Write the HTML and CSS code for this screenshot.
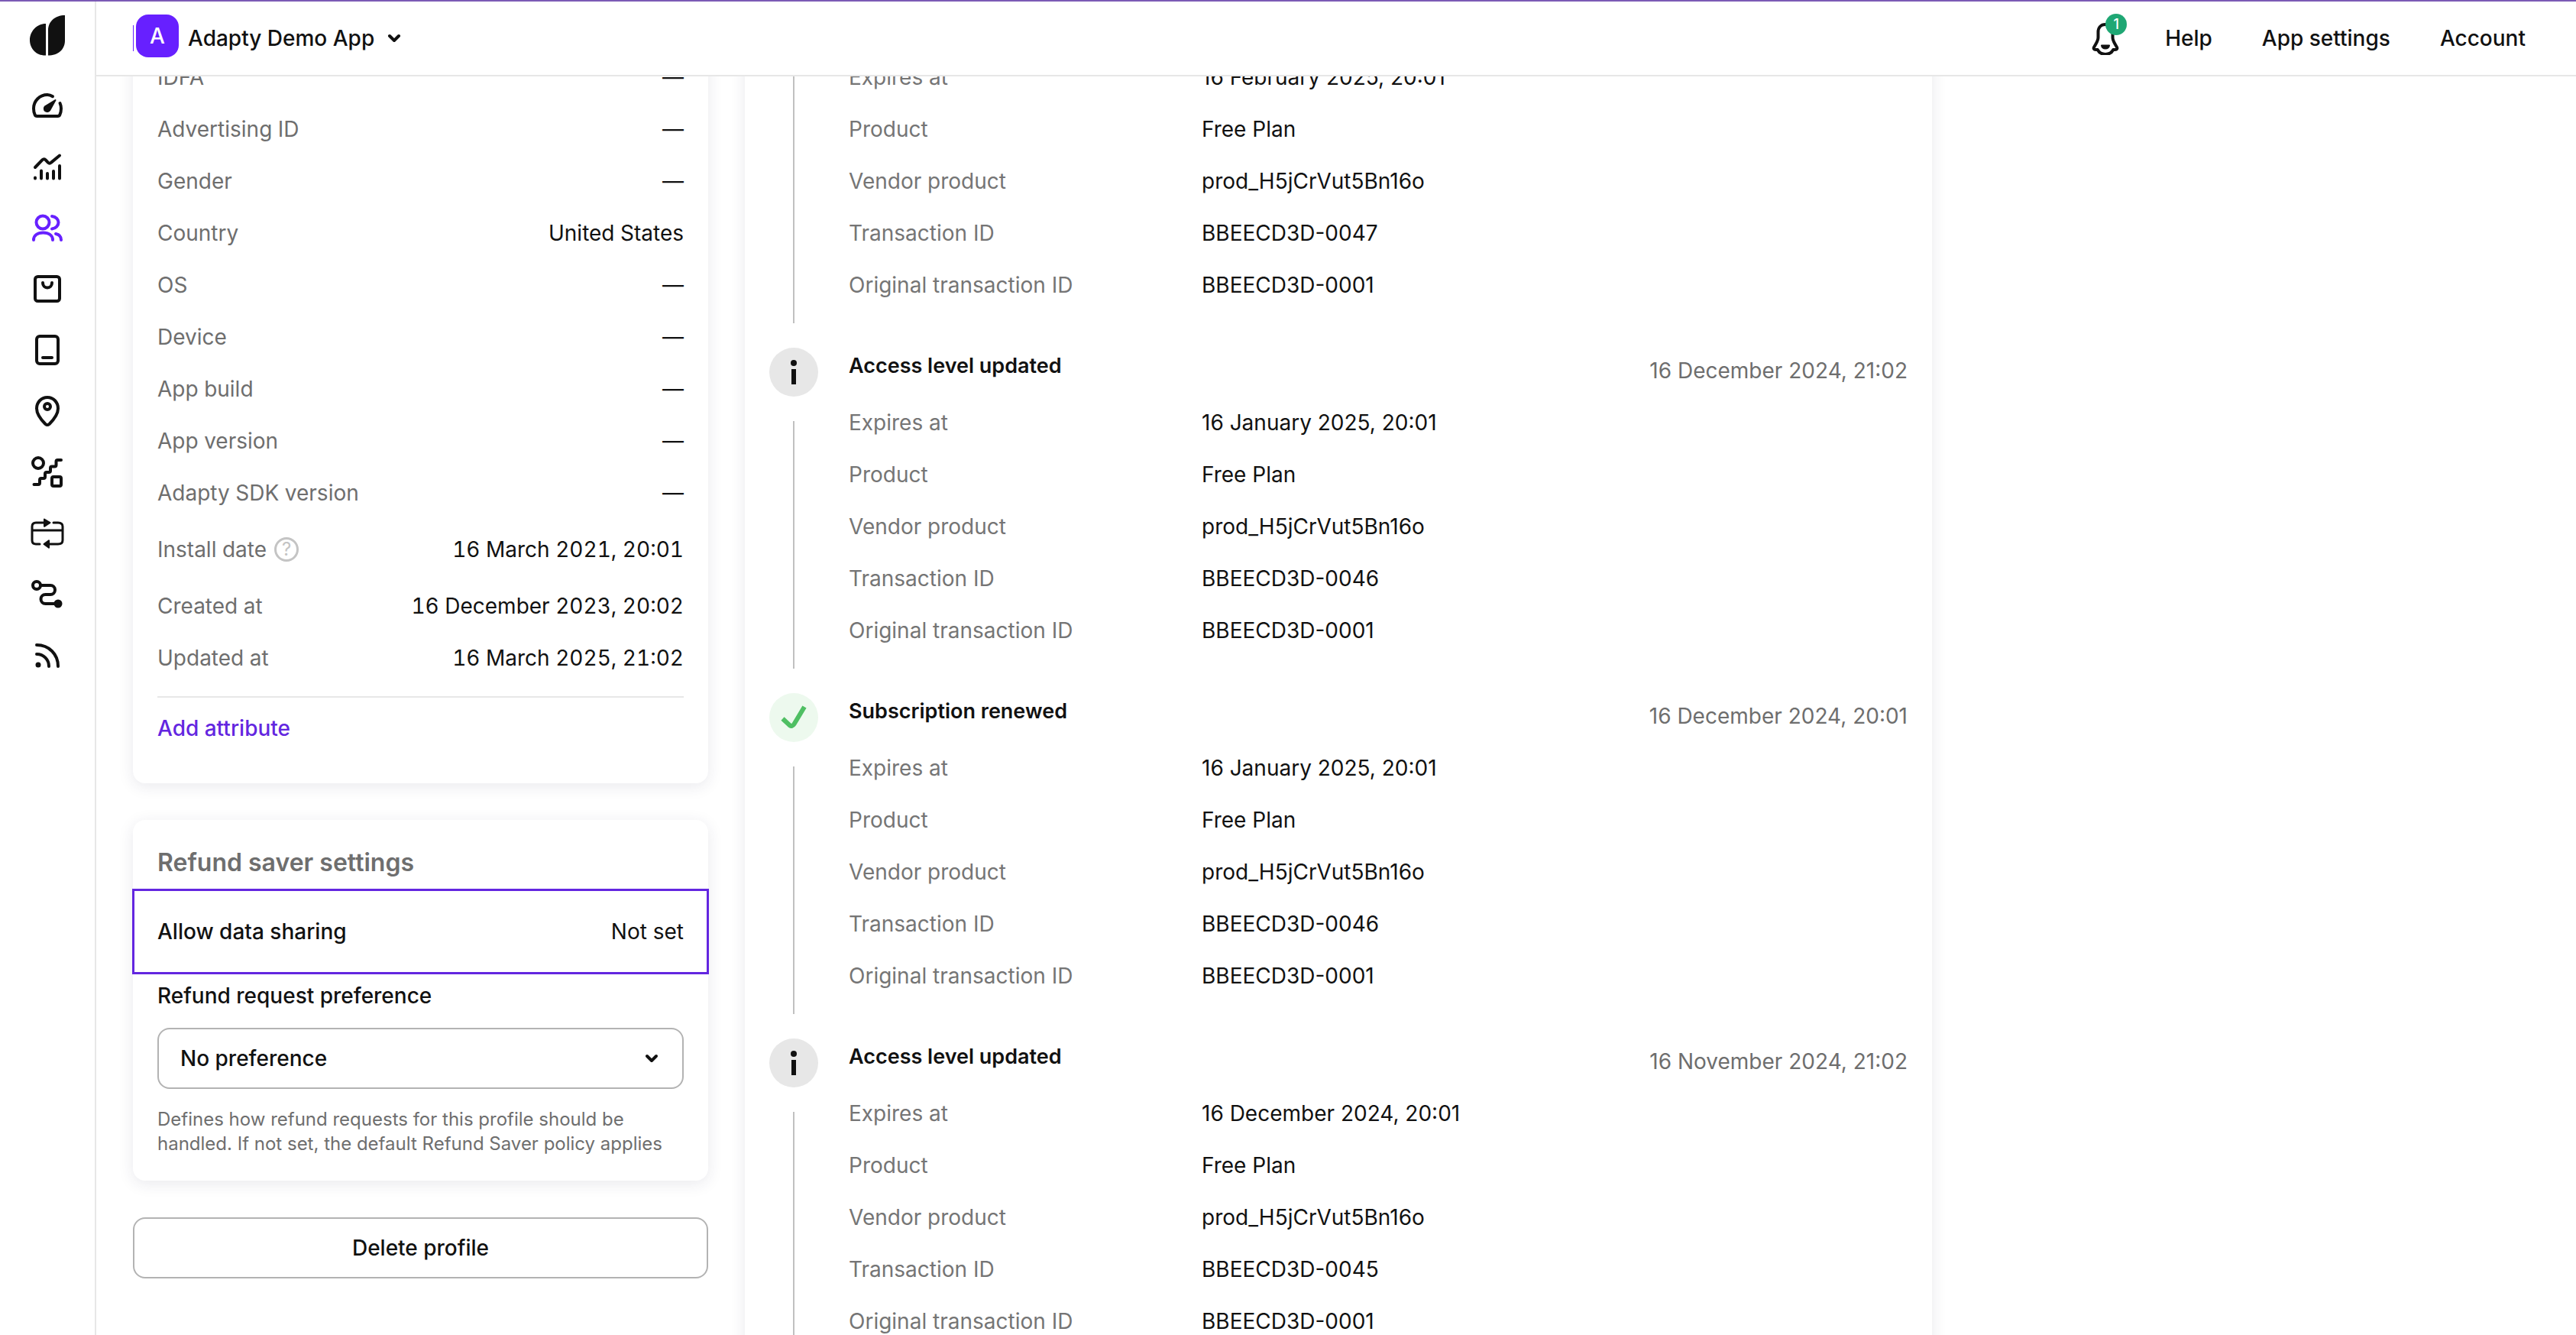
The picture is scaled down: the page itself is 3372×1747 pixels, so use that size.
FILE: index.html
```html
<!DOCTYPE html>
<html lang="en">
<head>
<meta charset="utf-8">
<meta name="viewport" content="width=device-width, initial-scale=1">
<title>Adapty Demo App</title>
<link rel="stylesheet" href="styles.css">
</head>
<body>
<div class="app">
  <nav class="sidebar">
    <a class="logo" href="#"><svg width="48" height="56" viewBox="0 -1 48 56"><path fill="#111" d="M22 12v41.500C10 54 1 45 1 33.500S10 12 22 12zM47 1v33c0 12-9 19.500-22 19.500V21C25 9 34 1 47 1z"/></svg></a>
    <a class="nav-link" href="#"><svg class="icon" viewBox="0 0 48 48"><path d="M31 12.200C28.800 10.800 26.500 10 24 10C14 10 6 18 6 28c0 3 .500 5.500 1.600 8c.500 1.300 1.400 2 2.900 2h27c1.500 0 2.400-.700 2.900-2c1.100-2.500 1.600-5 1.600-8c0-2.600-.500-4.800-1.500-7"/><path class="solid" d="M34.500 17L27.200 30.300A4 4 0 1 1 21 25.300Z"/></svg></a>
    <a class="nav-link" href="#"><svg class="icon" viewBox="0 0 48 48"><path d="M8 25L17.500 15.200c1.600-1.600 3-1.200 4.300.200l3 3.200c1.400 1.400 2.800 1.400 4.200 0L40 9.500"/><path d="M8 39.500v-1M16 39.500V29.500M24 39.500V33M32 39.500V30M40 39.500V23"/></svg></a>
    <a class="nav-link active" href="#"><svg class="icon" viewBox="0 0 48 48"><circle cx="18" cy="17" r="8.500"/><path d="M30 9c5 .500 8.500 4 8.500 8s-3.500 8-8.500 8.500M6 40c0-6 5-9.500 12.500-9.500S31 34 31 40M35 32c4.500 1 7 4 7 8"/></svg></a>
    <a class="nav-link" href="#"><svg class="icon" viewBox="0 0 48 48"><rect x="8" y="8" width="32" height="32" rx="3.500"/><path d="M18 16c0 4 2.500 6.500 6 6.500s6-2.500 6-6.500"/></svg></a>
    <a class="nav-link" href="#"><svg class="icon" viewBox="0 0 48 48"><rect x="10" y="6" width="28" height="36" rx="4"/><path d="M18 34h12"/></svg></a>
    <a class="nav-link" href="#"><svg class="icon" viewBox="0 0 48 48"><path d="M24 6C16 6 10 12.500 10 20.500c0 7.500 5.500 14.500 11.500 20.500q2.500 2 5 0C32.500 35 38 28 38 20.500C38 12.500 32 6 24 6z"/><circle cx="24" cy="18" r="4"/></svg></a>
    <a class="nav-link" href="#"><svg class="icon" viewBox="0 0 48 48"><circle cx="12" cy="12" r="7"/><path d="M42 8h-4.500q-2 0-2 2v4.500q0 2-2 2H30q-2 0-2 2V22q0 2-2 2h-3q-2 0-2 2v4q0 2-2 2h-3q-2 0-2 2v4q0 2-2 2H6.500"/><rect x="30" y="30" width="12" height="12" rx="2"/></svg></a>
    <a class="nav-link" href="#"><svg class="icon thin" viewBox="0 0 48 48"><path d="M26 10H9q-5 0-5 5v18q0 5 5 5h5M32 10h6q6 0 6 5v18q0 5-6 5H22M4 20h40"/><path class="solid" d="M20 5.500l7.500 4.500L20 14.800zM26 33.300v9.500L19.500 38z"/></svg></a>
    <a class="nav-link" href="#"><svg class="icon" viewBox="0 0 48 48"><circle cx="10" cy="12" r="5"/><path d="M16 12h12a6 6 0 0 1 0 12h-6.500a6 6 0 0 0 0 12H38"/><circle class="solid" cx="38" cy="36" r="4.500"/></svg></a>
    <a class="nav-link" href="#"><svg class="icon" viewBox="0 0 48 48"><path d="M10 10c16 0 28 12 28 28M10 22c9 0 16 7 16 16"/><circle class="solid" cx="12" cy="36" r="2.500"/></svg></a>
  </nav>

  <div class="page">
    <header class="topbar">
      <button class="app-switch" type="button">
        <span class="avatar-edge"></span>
        <span class="avatar">A</span>
        <span class="app-name">Adapty Demo App</span>
        <svg class="chevron" viewBox="0 0 20 20"><path d="M4 7l6 6 6-6"/></svg>
      </button>
      <div class="top-links">
        <button class="bell" type="button">
          <svg class="icon" viewBox="0 0 40 44"><path d="M20 4c-6 0-9.500 4-9.500 10v7c0 3-1 5-3 8.500l-2.300 4c-1.200 2-.200 3.500 2 3.500h2.500c2 4 5.500 6 10.300 6s8.300-2 10.300-6h2.500c2.200 0 3.200-1.500 2-3.500l-2.300-4c-2-3.500-3-5.500-3-8.500v-7C29.500 8 26 4 20 4z"/><path class="solid" d="M15 31.500h10c-.500 2.700-2.500 4-5 4s-4.500-1.300-5-4z"/></svg>
          <span class="badge">1</span>
        </button>
        <a href="#">Help</a>
        <a href="#">App settings</a>
        <a href="#">Account</a>
      </div>
    </header>

    <main class="content">
      <div class="profile">
        <section class="card card-cut">
          <dl class="attributes">
            <div class="row"><dt>IDFA</dt><dd>—</dd></div>
            <div class="row"><dt>Advertising ID</dt><dd>—</dd></div>
            <div class="row"><dt>Gender</dt><dd>—</dd></div>
            <div class="row"><dt>Country</dt><dd>United States</dd></div>
            <div class="row"><dt>OS</dt><dd>—</dd></div>
            <div class="row"><dt>Device</dt><dd>—</dd></div>
            <div class="row"><dt>App build</dt><dd>—</dd></div>
            <div class="row"><dt>App version</dt><dd>—</dd></div>
            <div class="row"><dt>Adapty SDK version</dt><dd>—</dd></div>
            <div class="row row-tall"><dt>Install date <span class="hint">?</span></dt><dd>16 March 2021, 20:01</dd></div>
            <div class="row"><dt>Created at</dt><dd>16 December 2023, 20:02</dd></div>
            <div class="row"><dt>Updated at</dt><dd>16 March 2025, 21:02</dd></div>
          </dl>
          <div class="card-foot"><button class="text-button" type="button">Add attribute</button></div>
        </section>

        <section class="card refund">
          <h2>Refund saver settings</h2>
          <div class="sharing"><span class="strong">Allow data sharing</span><span>Not set</span></div>
          <label class="strong" for="preference">Refund request preference</label>
          <div class="select">
            <select id="preference"><option>No preference</option></select>
            <svg class="chevron" viewBox="0 0 20 20"><path d="M4 7l6 6 6-6"/></svg>
          </div>
          <p class="help">Defines how refund requests for this profile should be handled. If not set, the default Refund Saver policy applies</p>
        </section>

        <button class="delete" type="button">Delete profile</button>
      </div>

      <section class="card card-cut timeline">
        <article class="event event-cut">
          <div class="rail"><span class="line"></span></div>
          <dl class="details">
            <div class="row"><dt>Expires at</dt><dd>16 February 2025, 20:01</dd></div>
            <div class="row"><dt>Product</dt><dd>Free Plan</dd></div>
            <div class="row"><dt>Vendor product</dt><dd>prod_H5jCrVut5Bn16o</dd></div>
            <div class="row"><dt>Transaction ID</dt><dd>BBEECD3D-0047</dd></div>
            <div class="row"><dt>Original transaction ID</dt><dd>BBEECD3D-0001</dd></div>
          </dl>
        </article>
        <article class="event">
          <div class="rail">
            <svg class="dot" viewBox="0 0 64 64"><circle cx="32" cy="32" r="32" fill="#e7e7e7"/><circle cx="32" cy="20" r="4" fill="#111"/><path fill="#111" d="M29 28h6v20h-6z"/></svg>
            <span class="line"></span>
          </div>
          <div>
            <header class="event-head"><h3>Access level updated</h3><time>16 December 2024, 21:02</time></header>
            <dl class="details">
              <div class="row"><dt>Expires at</dt><dd>16 January 2025, 20:01</dd></div>
              <div class="row"><dt>Product</dt><dd>Free Plan</dd></div>
              <div class="row"><dt>Vendor product</dt><dd>prod_H5jCrVut5Bn16o</dd></div>
              <div class="row"><dt>Transaction ID</dt><dd>BBEECD3D-0046</dd></div>
              <div class="row"><dt>Original transaction ID</dt><dd>BBEECD3D-0001</dd></div>
            </dl>
          </div>
        </article>
        <article class="event">
          <div class="rail">
            <svg class="dot" viewBox="0 0 64 64"><circle cx="32" cy="32" r="32" fill="#edf9ee"/><path d="M17.500 33.500l9 8.500q3.500 2.500 6-1.500L46 18" fill="none" stroke="#4fbf63" stroke-width="6"/></svg>
            <span class="line"></span>
          </div>
          <div>
            <header class="event-head"><h3>Subscription renewed</h3><time>16 December 2024, 20:01</time></header>
            <dl class="details">
              <div class="row"><dt>Expires at</dt><dd>16 January 2025, 20:01</dd></div>
              <div class="row"><dt>Product</dt><dd>Free Plan</dd></div>
              <div class="row"><dt>Vendor product</dt><dd>prod_H5jCrVut5Bn16o</dd></div>
              <div class="row"><dt>Transaction ID</dt><dd>BBEECD3D-0046</dd></div>
              <div class="row"><dt>Original transaction ID</dt><dd>BBEECD3D-0001</dd></div>
            </dl>
          </div>
        </article>
        <article class="event">
          <div class="rail">
            <svg class="dot" viewBox="0 0 64 64"><circle cx="32" cy="32" r="32" fill="#e7e7e7"/><circle cx="32" cy="20" r="4" fill="#111"/><path fill="#111" d="M29 28h6v20h-6z"/></svg>
            <span class="line"></span>
          </div>
          <div>
            <header class="event-head"><h3>Access level updated</h3><time>16 November 2024, 21:02</time></header>
            <dl class="details">
              <div class="row"><dt>Expires at</dt><dd>16 December 2024, 20:01</dd></div>
              <div class="row"><dt>Product</dt><dd>Free Plan</dd></div>
              <div class="row"><dt>Vendor product</dt><dd>prod_H5jCrVut5Bn16o</dd></div>
              <div class="row"><dt>Transaction ID</dt><dd>BBEECD3D-0045</dd></div>
              <div class="row"><dt>Original transaction ID</dt><dd>BBEECD3D-0001</dd></div>
            </dl>
          </div>
        </article>
      </section>
    </main>
  </div>
</div>
</body>
</html>
```

FILE: styles.css
```css
:root {
  --ink: #111;
  --muted: #6e6e6e;
  --line: #e7e7e7;
  --control: #b3b3b3;
  --accent: #6720ff;
}

* { box-sizing: border-box; }

body {
  margin: 0;
  font: 400 28px/44px Inter, "Liberation Sans", sans-serif;
  color: var(--ink);
  background: #fff;
}

h2, h3, p, dl, dd { margin: 0; }
a { color: inherit; text-decoration: none; }

button, select {
  font: inherit;
  font-weight: 500;
  color: inherit;
  background: none;
  border: 0;
  padding: 0;
}

.app {
  display: grid;
  grid-template-columns: 126px minmax(0, 1fr);
  height: 100vh;
  overflow: hidden;
  border-top: 2px solid #7b5ab5;
}

/* Side navigation */
.sidebar {
  display: flex;
  flex-direction: column;
  align-items: center;
  gap: 32px;
  padding-top: 16px;
  border-right: 2px solid var(--line);
}

.logo { height: 64px; }
.logo svg, .nav-link svg { display: block; }
.nav-link svg { width: 48px; height: 48px; }
.active { color: var(--accent); }

.icon {
  fill: none;
  stroke: currentColor;
  stroke-width: 4;
  stroke-linecap: round;
  stroke-linejoin: round;
}

.thin { stroke-width: 3; }
.solid { fill: currentColor; stroke-width: 2; }

.chevron {
  width: 20px;
  height: 20px;
  fill: none;
  stroke: currentColor;
  stroke-width: 4;
  stroke-linecap: round;
  stroke-linejoin: round;
}

/* Top bar */
.page {
  display: flex;
  flex-direction: column;
  min-width: 0;
  min-height: 0;
}

.topbar {
  position: relative;
  z-index: 1;
  flex: none;
  display: flex;
  justify-content: space-between;
  height: 98px;
  padding: 0 66px 0 48px;
  background: #fff;
  border-bottom: 2px solid var(--line);
}

.app-switch { display: flex; align-items: center; }
.avatar-edge { width: 1px; height: 34px; background: var(--accent); }

.avatar {
  width: 56px;
  height: 56px;
  margin: 0 12px 6px 3px;
  border-radius: 16px;
  background: var(--accent);
  color: #fff;
  line-height: 56px;
}

.app-name { margin-right: 16px; }

.top-links {
  display: flex;
  align-items: center;
  gap: 65px;
  font-weight: 500;
}

.bell { position: relative; width: 40px; height: 44px; margin-right: -7px; }
.bell .icon { display: block; width: 40px; height: 44px; }

.badge {
  position: absolute;
  top: -10px;
  right: -8px;
  width: 28px;
  height: 28px;
  border-radius: 50%;
  background: #1fa774;
  color: #fff;
  font-size: 18px;
  line-height: 28px;
}

/* Page body, shown part-way down its scroll */
.content {
  display: grid;
  grid-template-columns: minmax(0, 753px) minmax(0, 1554px);
  gap: 48px;
  align-items: start;
  margin-top: -33px;
  padding: 0 48px;
}

.profile { display: grid; gap: 48px; }

.card {
  padding: 32px;
  border-radius: 16px;
  background: #fff;
  box-shadow: 0 4px 20px rgba(40, 40, 80, 0.1);
}

.card-cut { padding-top: 0; border-top-left-radius: 0; border-top-right-radius: 0; }

.row { display: flex; align-items: center; height: 68px; }
.row-tall { height: 80px; }
dt { color: var(--muted); }

.attributes { font-variant-numeric: tabular-nums; }
.attributes .row { justify-content: space-between; }
.attributes dt { display: flex; align-items: center; gap: 10px; }

.hint {
  width: 32px;
  height: 32px;
  border: 3px solid #c4c4c4;
  border-radius: 50%;
  color: #c4c4c4;
  font-size: 24px;
  line-height: 26px;
  text-align: center;
}

.card-foot {
  margin-top: 16px;
  padding: 16px 0;
  border-top: 2px solid var(--line);
}

.text-button { display: block; line-height: 48px; color: #6326e0; }

h2 { font-size: 32px; font-weight: 600; line-height: 48px; color: var(--muted); }
.strong { font-weight: 500; }

.sharing {
  display: flex;
  align-items: center;
  justify-content: space-between;
  height: 112px;
  margin: 10px -33px 6px;
  padding: 0 30px;
  border: 3px solid #6326e0;
}

.refund label { display: block; margin-bottom: 20px; }

.select { display: grid; align-items: center; }
.select > * { grid-area: 1 / 1; }
.select .chevron { justify-self: end; margin-right: 32px; pointer-events: none; }

select {
  appearance: none;
  width: 100%;
  height: 80px;
  padding: 0 28px;
  border: 2px solid var(--control);
  border-radius: 16px;
}

.help { margin-top: 24px; font-size: 24px; line-height: 32px; color: var(--muted); }

.delete {
  height: 80px;
  border: 2px solid var(--control);
  border-radius: 16px;
}

/* Event timeline */
.event {
  display: grid;
  grid-template-columns: 64px minmax(0, 1fr);
  column-gap: 40px;
}

.event > :last-child { padding-bottom: 48px; }

.rail {
  display: flex;
  flex-direction: column;
  align-items: center;
  gap: 32px;
  padding-bottom: 32px;
}

.dot { width: 64px; height: 64px; }
.line { flex: 1; width: 2px; background: #c0c0c0; }

.event-head {
  display: flex;
  justify-content: space-between;
  height: 64px;
  line-height: 60px;
}

h3 { font-size: 27px; font-weight: 600; line-height: 48px; }
time { color: var(--muted); }
.details dt { flex: 0 0 462px; color: #757575; }
```
